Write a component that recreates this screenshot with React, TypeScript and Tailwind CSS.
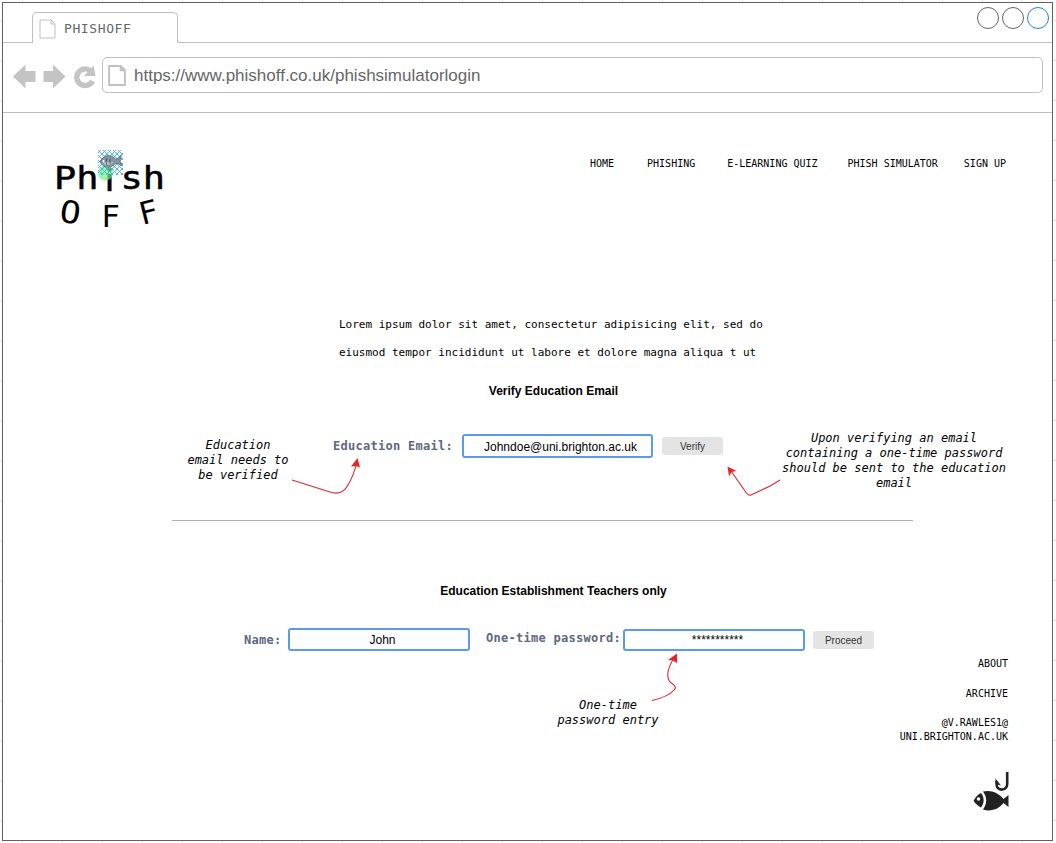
import type { ReactNode } from "react";

const mono = "font-['DejaVu_Sans_Mono',monospace]";
const sans = "font-['Liberation_Sans',sans-serif]";

function Page({ className, stroke }: { className: string; stroke: number }) {
  return (
    <svg className={className} viewBox="0 0 17 20" fill="none" stroke="#c0c0c0" strokeWidth={stroke}>
      <path d="M1 1H12L16 5V19H1Z M12 1V5H16" />
    </svg>
  );
}

function Label({ children, className }: { children: ReactNode; className: string }) {
  return (
    <span className={`${mono} shrink-0 whitespace-nowrap text-[12px] leading-[16px] font-bold tracking-[0.28px] text-[#5e6780] ${className}`}>
      {children}
    </span>
  );
}

function Field({ children, className }: { children: ReactNode; className: string }) {
  return (
    <div className={`${sans} flex shrink-0 items-center justify-center rounded-[3px] border-2 border-[#5b9bea] bg-white text-[12px] text-black ${className}`}>
      {children}
    </div>
  );
}

function Action({ children, className }: { children: ReactNode; className: string }) {
  return (
    <button className={`${sans} h-[18px] w-[61px] shrink-0 rounded-[3px] bg-[#e4e4e4] pt-[1px] text-[10px] leading-[18px] text-[#333] ${className}`}>
      {children}
    </button>
  );
}

function Note({ children, className }: { children: ReactNode; className: string }) {
  return (
    <p className={`${mono} shrink-0 whitespace-nowrap text-center text-[12px] leading-[15px] italic text-black ${className}`}>
      {children}
    </p>
  );
}

function Logo() {
  return (
    <div className={`${mono} relative ml-[51px] mt-[47px] h-[80px] w-[120px] text-black`}>
      <div className="flex h-[38px] origin-top scale-y-[0.85] text-[37px] leading-[44px] [-webkit-text-stroke:0.6px_black]">
        <span>Ph</span>
        <span className="w-[22px] text-center font-['Noto_Sans',sans-serif]">i</span>
        <span>sh</span>
      </div>
      <div className="flex h-[32px] w-[104px] origin-top items-center justify-between text-[31px] leading-[32px]">
        <span className="ml-[7px] mt-[-4px] rotate-[8deg] scale-x-[1.12]">O</span>
        <span className="mt-[3px] ml-[2px]">F</span>
        <span className="mt-[-4px] -rotate-[14deg]">F</span>
      </div>
      <svg className="absolute left-[43px] -top-[11px]" width="28" height="34" viewBox="0 0 28 34" fill="none">
        <defs>
          <pattern id="lattice" width="5" height="5" patternUnits="userSpaceOnUse">
            <path d="M0 0L5 5M5 0L0 5" stroke="#3fb0e4" strokeWidth="0.9" />
          </pattern>
        </defs>
        <circle cx="8.500" cy="24" r="7.500" fill="#70ef89" fillOpacity="0.7" />
        <rect x="1" y="1" width="25" height="25" fill="url(#lattice)" />
        <path d="M3 12.500C7 5 15 5 19 10.500L24.500 6.500L23 12L25.500 17L19 14C14 20 7 20 3 12.500Z" fill="#8393a0" stroke="#4a5a68" strokeWidth="0.6" />
        <path d="M5 13.500C9 12 13 13.500 17 13C13 17 8 17 5 13.500Z" fill="#b6c3ca" />
        <path d="M10 9Q8 13 10 16 M13 10V15" stroke="#405766" strokeWidth="0.9" />
        <circle cx="6.500" cy="12" r="1" fill="#fff" />
      </svg>
    </div>
  );
}

function HookedFish() {
  return (
    <svg className="mr-[-2px] mt-[28px] h-[39px] w-[37px]" viewBox="0 0 37 39" fill="none">
      <path d="M34.2 0V12C34.2 19 24 19.5 23.7 13V9" stroke="#222" strokeWidth="2.6" />
      <path d="M22.4 6.5L28 13.5L22.5 12Z" fill="#222" />
      <path d="M10 19.5C18 17.5 26 21 30.5 27L35.5 23V35L30.5 31C26 37 18 40 10 37.5C14.5 31 14 25 10 19.5Z" fill="#222" />
      <path d="M8 21C11.5 25 11.5 31 8 35.5C5 34 2 31.5 .5 28.8C2.5 25 5 22.5 8 21Z" fill="#222" />
      <circle cx="5.5" cy="27" r="1.7" fill="#fff" />
    </svg>
  );
}

export default function App() {
  return (
    <div className="h-[843px] w-[1056px] overflow-hidden bg-white bg-[linear-gradient(#e6e6e6_1px,transparent_1px),linear-gradient(90deg,#e6e6e6_1px,transparent_1px)] bg-[length:40px_40px] bg-[position:22px_20px] p-[2px]">
      <div className="relative flex h-[839px] w-[1051px] flex-col border border-[#606060] bg-white">
        {/* Tab strip */}
        <div className="flex h-[40px] shrink-0 items-end justify-between">
          <div className="h-full w-[29px] border-b border-[#c0c0c0]" />
          <div className="flex h-[31px] w-[146px] items-center rounded-t-[5px] border-x border-t border-[#c0c0c0]">
            <Page className="ml-[6px] mt-[1px] h-[20px] w-[17px]" stroke={1} />
            <span className={`${mono} ml-[8px] mt-[2px] text-[13px] leading-[16px] tracking-[0.6px] text-[#666]`}>PHISHOFF</span>
          </div>
          <div className="flex h-full flex-1 justify-end gap-[3px] border-b border-[#c0c0c0] pr-[3.5px] pt-[4px]">
            <div className="size-[22px] rounded-full border border-[#666]" />
            <div className="size-[22px] rounded-full border border-[#666]" />
            <div className="size-[22px] rounded-full border border-[#2482d8]" />
          </div>
        </div>

        {/* Address bar */}
        <div className="flex h-[70px] shrink-0 border-b border-[#c0c0c0]">
          <svg className="ml-[10px] mt-[21px] h-[25px] w-[84px] shrink-0" viewBox="0 0 84 25">
            <path d="M0 12.5L12.5 .5V7H22.5V18H12.5V24.5Z M52.5 12.5L40 .5V7H30.5V18H40V24.5Z" fill="#c4c4c4" />
            <path d="M79.500 17A8.300 8.300 0 1 1 77 6.500" fill="none" stroke="#c4c4c4" strokeWidth="5.400" />
            <path d="M80.500 1.500L82.500 12H71Z" fill="#c4c4c4" />
          </svg>
          <div className="ml-[5px] mt-[14px] flex h-[36px] w-[941px] items-center rounded-[5px] border border-[#c0c0c0]">
            <Page className="ml-[5px] h-[21px] w-[18px]" stroke={1.8} />
            <span className={`${sans} ml-[8px] mt-[2px] text-[17px] leading-[20px] text-[#666]`}>https://www.phishoff.co.uk/phishsimulatorlogin</span>
          </div>
        </div>

        {/* Site header */}
        <header className="flex h-[198px] shrink-0 justify-between">
          <Logo />
          <nav className={`${mono} mr-[46px] mt-[44px] flex h-[14px] text-[10px] leading-[14px] text-black`}>
            <a>HOME</a>
            <a className="ml-[33px]">PHISHING</a>
            <a className="ml-[32px]">E-LEARNING QUIZ</a>
            <a className="ml-[30px]">PHISH SIMULATOR</a>
            <a className="ml-[26px]">SIGN UP</a>
          </nav>
        </header>

        <p className={`${mono} ml-[336px] h-[56px] shrink-0 whitespace-nowrap text-[11px] leading-[28px] text-black`}>
          Lorem ipsum dolor sit amet, consectetur adipisicing elit, sed do
          <br />
          eiusmod tempor incididunt ut labore et dolore magna aliqua t ut
        </p>
        <h2 className={`${sans} mt-[16px] ml-[52px] h-[16px] shrink-0 text-center text-[12px] leading-[16px] font-bold text-black`}>
          Verify Education Email
        </h2>

        {/* Email verification */}
        <section className="mt-[32px] flex h-[89px] w-full shrink-0 items-start">
          <Note className="ml-[184px] mt-[7px] w-[102px]">
            Education
            <br />
            email needs to
            <br />
            be verified
          </Note>
          <Label className="ml-[44px] mt-[7px] w-[129px]">Education Email:</Label>
          <Field className="mt-[3px] h-[24px] w-[191px] pt-[1px] pl-[6px]">Johndoe@uni.brighton.ac.uk</Field>
          <Action className="ml-[9px] mt-[6px]">Verify</Action>
          <Note className="ml-[55px] w-[232px]">
            Upon verifying an email
            <br />
            containing a one-time password
            <br />
            should be sent to the education
            <br />
            email
          </Note>
        </section>
        <hr className="ml-[169px] w-[741px] shrink-0 border-t border-[#b0b0b0]" />

        {/* Teacher sign-in */}
        <h2 className={`${sans} mt-[62px] ml-[52px] h-[16px] shrink-0 text-center text-[12px] leading-[16px] font-bold text-black`}>
          Education Establishment Teachers only
        </h2>
        <section className="mt-[29px] flex h-[28px] shrink-0 items-start">
          <Label className="ml-[241px] mt-[4px] w-[44px]">Name:</Label>
          <Field className="h-[23px] w-[182px] pt-[1px] pl-[7px]">John</Field>
          <Label className="ml-[16px] mt-[2px] w-[137px]">One-time password:</Label>
          <Field className="mt-[1px] h-[22px] w-[182px] pl-[7px]">***********</Field>
          <Action className="ml-[8px] mt-[3px]">Proceed</Action>
        </section>

        <div className="flex justify-between">
          <Note className="ml-[552px] mt-[42px] w-[106px]">
            One-time
            <br />
            password entry
          </Note>
          <footer className={`${mono} mr-[44px] flex flex-col items-end text-right text-[10px] leading-[14px] text-black`}>
            <a className="mt-[1px]">ABOUT</a>
            <a className="mt-[16px]">ARCHIVE</a>
            <p className="mt-[15px]">
              @V.RAWLES1@
              <br />
              UNI.BRIGHTON.AC.UK
            </p>
            <HookedFish />
          </footer>
        </div>

        {/* Annotation arrows */}
        <svg className="pointer-events-none absolute left-[288px] top-[453px]" width="490" height="250" viewBox="291 456 490 250" fill="none" stroke="#e3262e" strokeWidth="1.1">
          <path d="M292 480L330 492Q342 496 348 485Q354 475 356.5 463" />
          <path d="M780 480L770 486Q762 490 751 495Q748 496 745 491L731 471" />
          <path d="M652 700.5Q668 697 674 690Q678 687 670 682Q664 674 674 658" />
          <g fill="#ee2028" stroke="none">
            <path d="M357.500 458L360 467.500L356 466L351 466.500Z" />
            <path d="M727.500 466.500L736.500 471L731.500 472L729 476.500Z" />
            <path d="M677 653.500L677 663L673 660.500L668 660Z" />
          </g>
        </svg>
      </div>
    </div>
  );
}
